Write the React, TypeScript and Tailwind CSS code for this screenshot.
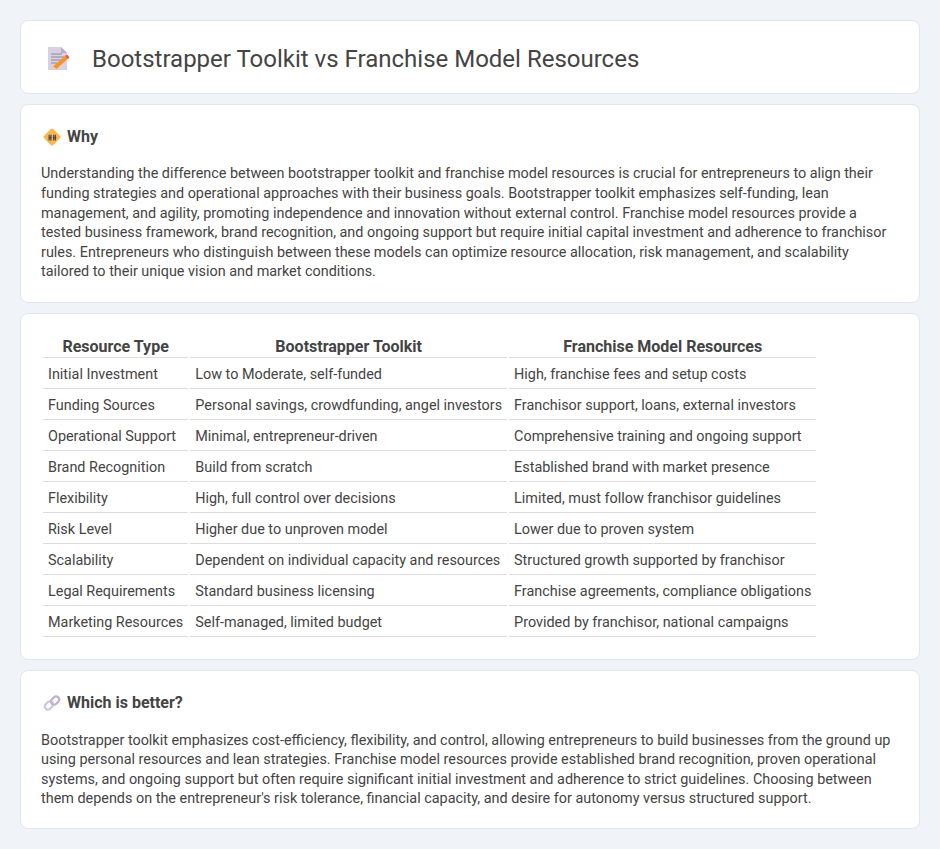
const rows = [
  ["Initial Investment", "Low to Moderate, self-funded", "High, franchise fees and setup costs"],
  ["Funding Sources", "Personal savings, crowdfunding, angel investors", "Franchisor support, loans, external investors"],
  ["Operational Support", "Minimal, entrepreneur-driven", "Comprehensive training and ongoing support"],
  ["Brand Recognition", "Build from scratch", "Established brand with market presence"],
  ["Flexibility", "High, full control over decisions", "Limited, must follow franchisor guidelines"],
  ["Risk Level", "Higher due to unproven model", "Lower due to proven system"],
  ["Scalability", "Dependent on individual capacity and resources", "Structured growth supported by franchisor"],
  ["Legal Requirements", "Standard business licensing", "Franchise agreements, compliance obligations"],
  ["Marketing Resources", "Self-managed, limited budget", "Provided by franchisor, national campaigns"],
];

function DocIcon() {
  return (
    <svg width="24" height="24" viewBox="1 1 24 24" className="shrink-0">
      <path d="M2 1h13l6 6v17H2z" fill="#d9d0e3" />
      <path d="M15 1l6 6h-6z" fill="#b9aec6" />
      <path d="M5 8h11M5 11h13M5 14h11M5 17h6" stroke="#8f8a96" strokeWidth="1.2" />
      <path d="M7 20.500L19 10l2.500 3L10.500 23l-4.500 1z" fill="#f79329" />
      <path d="M19 10l.8-.8a1.500 1.500 0 0 1 2 .1l1 1.300a1.500 1.500 0 0 1-.2 2l-1.100.4z" fill="#f0524f" />
      <path d="M7 20.500l-1 3.500 4.500-1z" fill="#fbd9b0" />
    </svg>
  );
}

function SignIcon() {
  return (
    <svg width="18" height="18" viewBox="0 0 16 16" className="shrink-0">
      <rect x="2.300" y="2.300" width="11.400" height="11.400" rx="1.500" transform="rotate(45 8 8)" fill="#fdb54a" />
      <path d="M5.500 6v5M7 6v5M9.500 6v5M11 6v5M4.800 8.500h3M8.800 8.500h3" stroke="#4a4a55" strokeWidth="1.100" />
    </svg>
  );
}

function LinkIcon() {
  return (
    <svg width="18" height="18" viewBox="0 0 16 16" className="shrink-0" fill="none">
      <rect x="1.200" y="7.500" width="8" height="5.500" rx="2.700" transform="rotate(-45 5.200 10.200)" stroke="#cfc6dc" strokeWidth="2" />
      <rect x="6.800" y="3" width="8" height="5.500" rx="2.700" transform="rotate(-45 10.800 5.800)" stroke="#bdb3cc" strokeWidth="2" />
    </svg>
  );
}

export default function App() {
  return (
    <div className="min-h-[849px] bg-[#f0f4f8] p-5 font-['Roboto',sans-serif] text-[14.4px] leading-[19.6px] text-[#444]">
      <div className="mb-2.5 flex h-[74px] items-center gap-[21px] rounded-lg border border-[#e2e6ee] bg-white pt-[3px] pl-[26px]">
        <DocIcon />
        <h1 className="text-2xl font-normal text-[#444]">Bootstrapper Toolkit vs Franchise Model Resources</h1>
      </div>

      <div className="mb-2.5 h-[199px] rounded-lg border border-[#e2e6ee] bg-white px-5 pt-[22px]">
        <div className="mb-[17.400px] flex items-center gap-[6px] pl-[2px]">
          <SignIcon />
          <h2 className="text-base font-bold leading-[20px] text-[#444]">Why</h2>
        </div>
        <p>
          Understanding the difference between bootstrapper toolkit and franchise model resources is crucial for entrepreneurs to align their funding strategies and operational approaches with their business goals. Bootstrapper toolkit emphasizes self-funding, lean management, and agility, promoting independence and innovation without external control. Franchise model resources provide a tested business framework, brand recognition, and ongoing support but require initial capital investment and adherence to franchisor rules. Entrepreneurs who distinguish between these models can optimize resource allocation, risk management, and scalability tailored to their unique vision and market conditions.
        </p>
      </div>

      <div className="mb-2.5 h-[347px] rounded-lg border border-[#e2e6ee] bg-white px-5 pt-[19px]">
        <table className="border-separate border-spacing-[2px]">
          <thead>
            <tr>
              {["Resource Type", "Bootstrapper Toolkit", "Franchise Model Resources"].map((h) => (
                <th key={h} className="border-b border-[#ddd] px-[5px] pt-[2px] pb-0 text-center text-base font-bold leading-[20px] text-[#444]">
                  {h}
                </th>
              ))}
            </tr>
          </thead>
          <tbody>
            {rows.map((r) => (
              <tr key={r[0]}>
                {r.map((c) => (
                  <td key={c} className="border-b border-[#ddd] px-[5px] pt-[5.400px] pb-[3px] text-left">
                    {c}
                  </td>
                ))}
              </tr>
            ))}
          </tbody>
        </table>
      </div>

      <div className="h-[159px] rounded-lg border border-[#e2e6ee] bg-white px-5 pt-[22px]">
        <div className="mb-[17.700px] flex items-center gap-[6px] pl-[2px]">
          <LinkIcon />
          <h2 className="text-base font-bold leading-[20px] text-[#444]">Which is better?</h2>
        </div>
        <p>
          Bootstrapper toolkit emphasizes cost-efficiency, flexibility, and control, allowing entrepreneurs to build businesses from the ground up using personal resources and lean strategies. Franchise model resources provide established brand recognition, proven operational systems, and ongoing support but often require significant initial investment and adherence to strict guidelines. Choosing between them depends on the entrepreneur's risk tolerance, financial capacity, and desire for autonomy versus structured support.
        </p>
      </div>
    </div>
  );
}
